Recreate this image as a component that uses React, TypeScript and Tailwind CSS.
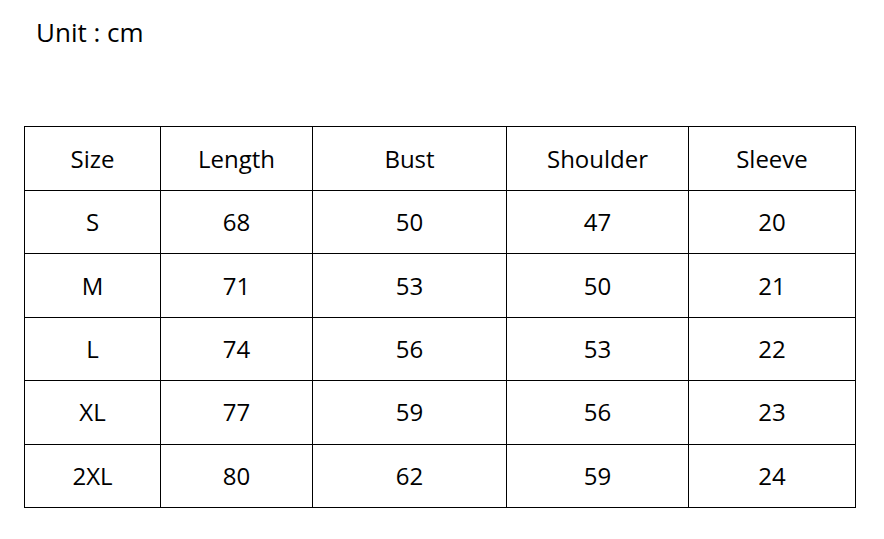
const headers = ["Size", "Length", "Bust", "Shoulder", "Sleeve"];
const widths = ["w-[136px]", "w-[152px]", "w-[194px]", "w-[182px]", "w-[167px]"];

const rows = [
  ["S", "68", "50", "47", "20"],
  ["M", "71", "53", "50", "21"],
  ["L", "74", "56", "53", "22"],
  ["XL", "77", "59", "56", "23"],
  ["2XL", "80", "62", "59", "24"],
];

export default function App() {
  return (
    <div className="w-[884px] h-[539px] bg-white text-black font-['Open_Sans',sans-serif] overflow-hidden">
      <div className="pl-[36px] pt-[15px] text-[26px] leading-[35px]">Unit : cm</div>

      <table className="ml-[24px] mt-[76px] w-[831px] table-fixed border-collapse text-[24px]">
        <thead>
          <tr className="h-[64px]">
            {headers.map((h, i) => (
              <th key={h} className={`${widths[i]} border border-black font-normal text-center`}>
                {h}
              </th>
            ))}
          </tr>
        </thead>
        <tbody>
          {rows.map((r) => (
            <tr key={r[0]} className="h-[63.4px]">
              {r.map((c, i) => (
                <td key={i} className="border border-black text-center">
                  {c}
                </td>
              ))}
            </tr>
          ))}
        </tbody>
      </table>
    </div>
  );
}
